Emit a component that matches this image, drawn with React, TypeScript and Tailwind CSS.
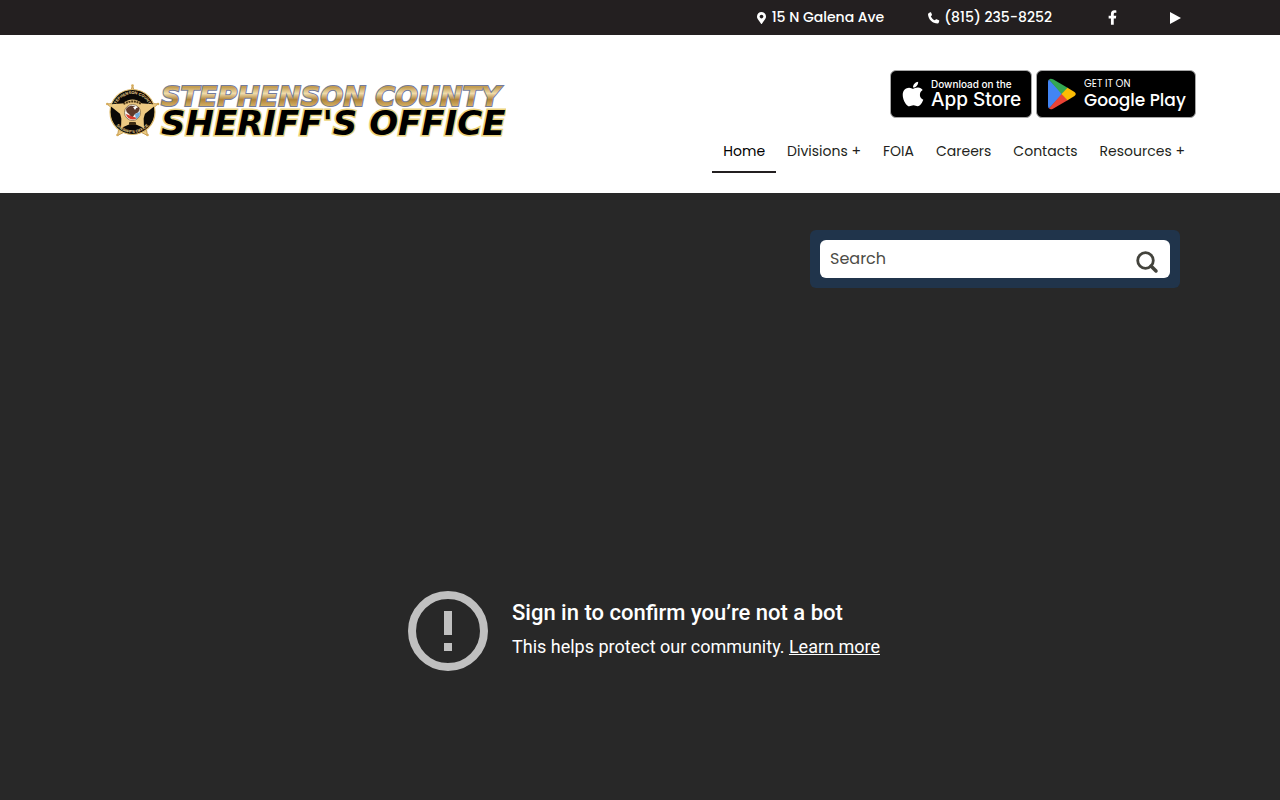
import type { ReactNode } from 'react';
import { FaApple, FaFacebookF, FaMapMarkerAlt } from 'react-icons/fa';

const navItems = [
  { label: 'Home', active: true },
  { label: 'Divisions +' },
  { label: 'FOIA' },
  { label: 'Careers' },
  { label: 'Contacts' },
  { label: 'Resources +' },
];

function Logo() {
  return (
    <svg width="400" height="64" viewBox="0 0 400 64" role="img" aria-label="Stephenson County Sheriff's Office">
      <defs>
        <linearGradient id="gold" x1="0" y1="0" x2="0" y2="1">
          <stop offset="0.2" stopColor="#c39d52" />
          <stop offset="0.4" stopColor="#f0dcab" />
          <stop offset="0.6" stopColor="#b0843a" />
          <stop offset="0.8" stopColor="#d3ae62" />
        </linearGradient>
        <path id="arc-top" d="M8.500 30a18 18 0 0 1 36 0" />
        <path id="arc-bottom" d="M5.500 30a21 21 0 0 0 42 0" />
      </defs>

      {/* Badge */}
      <path
        d="M26.500 3 31 20 52 22 38 34 41.500 53.500 26.500 46 11.500 53.500 15 34 1 22 22 20Z"
        fill="#ecc982"
        stroke="#b88c3c"
        strokeWidth="0.8"
      />
      <circle cx="26.500" cy="30" r="22.500" fill="#0b0906" stroke="#e0bc6c" strokeWidth="1.2" />
      <path
        d="M26.500 18 31 21 50.500 22.500 37.500 33 38 46 26.500 41 15 46 15.500 33 2.500 22.500 22 21Z"
        fill="#ecc982"
      />
      <circle cx="26.500" cy="3.500" r="1.300" fill="#d5ab5b" />
      <circle cx="52" cy="22" r="1.300" fill="#d5ab5b" />
      <circle cx="1.300" cy="22" r="1.300" fill="#d5ab5b" />
      <circle cx="41.500" cy="53" r="1.300" fill="#d5ab5b" />
      <circle cx="11.500" cy="53" r="1.300" fill="#d5ab5b" />
      <g fill="#efd48f" fontFamily="Liberation Sans, sans-serif" fontSize="4" fontWeight="700" textAnchor="middle">
        <text>
          <textPath href="#arc-top" startOffset="50%">STEPHENSON COUNTY</textPath>
        </text>
        <text>
          <textPath href="#arc-bottom" startOffset="50%">SHERIFF'S OFFICE</textPath>
        </text>
      </g>
      <circle cx="26.500" cy="30" r="12.500" fill="#ecc982" />
      <path d="M17.500 22q9-5 18 0" fill="none" stroke="#4a3515" strokeWidth="2" strokeDasharray="2 0.700" />
      <circle cx="26.500" cy="30.500" r="8" fill="#f4f1ec" stroke="#7b6440" strokeWidth="0.8" />
      <path d="M20 27c3-4 8-4 10-1l3-1c1 4-1 6-4 7l-3 4-3-4c-2-1-3-3-3-5z" fill="#5d3a2c" />
      <path d="M20 32l5 2 6 2c-4 3-10 1-11-4z" fill="#d63c2f" />
      <path d="M29 32l5-2c0 4-2 6-4 7z" fill="#6fa9d8" />
      <path d="M27 25l4 0-2 3z" fill="#fff" />
      <rect x="23" y="40" width="7" height="3" rx="1" fill="#3d2c12" />

      {/* Wordmark */}
      <g fontFamily="DejaVu Sans, sans-serif" fontStyle="italic" fontWeight="700" paintOrder="stroke">
        <text x="55" y="24" fontSize="27" fill="url(#gold)" stroke="#737b9b" strokeWidth="2">
          STEPHENSON COUNTY
        </text>
        <text x="55" y="53" fontSize="34" fill="#000" stroke="#ecd47e" strokeWidth="3">
          SHERIFF'S OFFICE
        </text>
      </g>
    </svg>
  );
}

function GooglePlayIcon() {
  return (
    <svg width="28" height="32" viewBox="0 0 28 32" aria-hidden="true">
      <path d="M1 1.500Q0 2.200 0 4v24q0 1.800 1 2.500L15 16z" fill="#4285f4" />
      <path d="M1 1.500Q2.500 0 5 1.300L20 10 14 16.500z" fill="#34a853" />
      <path d="M1 30.500Q2.500 32 5 30.700L20 22 14 15.500z" fill="#ea4335" />
      <path d="M19.500 9.700 26.500 14q2.500 2 0 4l-7 4.300L13.500 16z" fill="#fbbc04" />
    </svg>
  );
}

function PhoneIcon() {
  return (
    <svg width="12" height="12" viewBox="0 0 12 12" fill="currentColor" aria-hidden="true">
      <path d="M.6 1.200 2.200.300c.4-.2.700 0 .9.300l.8 2c.2.400.1.700-.2.900l-.9.700c.8 1.900 2.200 3.300 4.100 4.100l.8-.9c.2-.3.600-.3.900-.2l2.300 1c.4.200.500.500.4.900l-.6 1.700c-.2.500-.5.700-1 .7C4.500 11.400.2 7.300 0 2.200c0-.4.200-.8.600-1z" />
    </svg>
  );
}

interface StoreBadgeProps {
  icon: ReactNode;
  caption: string;
  name: string;
  className: string;
  captionClass: string;
  nameClass: string;
}

function StoreBadge({ icon, caption, name, className, captionClass, nameClass }: StoreBadgeProps) {
  return (
    <a
      href="#"
      className={`flex h-12 items-center rounded-md border border-[#a6a6a6] bg-black text-white ${className}`}
    >
      {icon}
      <span className="flex flex-col whitespace-nowrap">
        <span className={captionClass}>{caption}</span>
        <span className={nameClass}>{name}</span>
      </span>
    </a>
  );
}

export default function App() {
  return (
    <div className="flex min-h-screen flex-col bg-[#282828] font-['Poppins','Inter',sans-serif]">
      {/* Contact bar */}
      <div className="flex h-[35px] items-center justify-end bg-[#231f20] pr-[99px] text-sm font-medium text-white">
        <a href="#" className="flex items-center gap-1.5">
          <FaMapMarkerAlt className="h-3 w-[9px]" />
          <span className="pb-0.5">15 N Galena Ave</span>
        </a>
        <a href="#" className="ml-11 flex items-center gap-1">
          <PhoneIcon />
          <span className="pb-0.5">(815) 235-8252</span>
        </a>
        <a href="#" aria-label="Facebook" className="ml-14">
          <FaFacebookF className="h-[15px] w-[9px]" />
        </a>
        <a href="#" aria-label="YouTube" className="ml-[53px]">
          <svg width="11" height="12" viewBox="0 0 11 12" fill="currentColor" aria-hidden="true">
            <path d="M0 0 11 6 0 12z" />
          </svg>
        </a>
      </div>

      <header className="flex items-start justify-between bg-white pt-[35px] pr-[84px] pb-5 pl-[106px]">
        <a href="#" className="mt-3">
          <Logo />
        </a>
        <div className="flex flex-col items-end">
          <div className="flex gap-1">
            <StoreBadge
              icon={<FaApple className="h-7 w-6" />}
              caption="Download on the"
              name="App Store"
              className="w-[142px] gap-1.5 pl-2.5"
              captionClass="font-[Inter] text-[10px] leading-3 font-medium"
              nameClass="font-[Inter] text-[19px] leading-5 font-medium"
            />
            <StoreBadge
              icon={<GooglePlayIcon />}
              caption="GET IT ON"
              name="Google Play"
              className="w-[160px] gap-2 pl-[11px]"
              captionClass="text-[10px] leading-3"
              nameClass="text-[17px] leading-5 font-medium"
            />
          </div>
          <nav className="mt-3 flex text-sm text-[#231f20]">
            {navItems.map((item) => (
              <a
                key={item.label}
                href="#"
                className={`border-b-2 px-[11px] pt-2.5 pb-[9px] leading-[22px] whitespace-nowrap ${
                  item.active ? 'border-[#231f20] text-black' : 'border-transparent'
                }`}
              >
                {item.label}
              </a>
            ))}
          </nav>
        </div>
      </header>

      <main className="flex flex-1 flex-col">
        <form className="mt-[37px] mr-[100px] w-[370px] self-end rounded-md bg-[#20344b] p-2.5">
          <div className="flex h-[38px] items-center rounded-md bg-white pr-[11px] pl-2.5 text-[#43433c]">
            <input
              type="text"
              aria-label="Search"
              placeholder="Search"
              className="min-w-0 flex-1 bg-transparent text-base outline-none placeholder:text-[#4c4c46]"
            />
            <button type="submit" aria-label="Submit search" className="mt-1.5">
              <svg width="24" height="24" viewBox="0 0 24 24" fill="none" stroke="currentColor">
                <circle cx="10.500" cy="10.500" r="7.800" strokeWidth="2.800" />
                <path d="m16 16 5 5" strokeWidth="3.500" strokeLinecap="round" />
              </svg>
            </button>
          </div>
        </form>

        {/* Video player message */}
        <div className="mt-[303px] ml-2 flex items-center justify-center gap-6 font-[Roboto,sans-serif] text-white">
          <svg width="80" height="80" viewBox="0 0 80 80" aria-hidden="true">
            <circle cx="40" cy="40" r="36" fill="none" stroke="#c0c0c0" strokeWidth="8" />
            <path d="M36 20h8v24h-8zM36 52h8v8h-8z" fill="#c0c0c0" />
          </svg>
          <div className="pb-1">
            <p className="text-[22px] leading-7 font-medium">Sign in to confirm you’re not a bot</p>
            <p className="mt-2 text-lg leading-6">
              This helps protect our community.{' '}
              <a href="#" className="underline">Learn more</a>
            </p>
          </div>
        </div>
      </main>
    </div>
  );
}
